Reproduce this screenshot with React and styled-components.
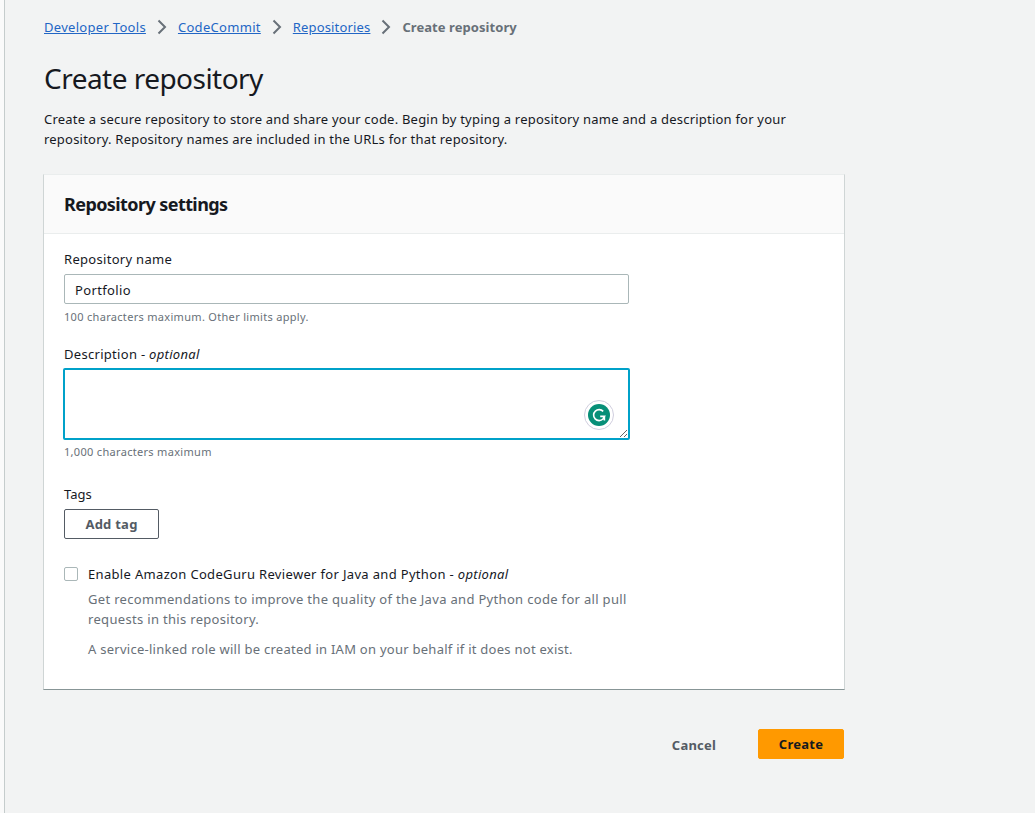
import React from 'react';
import styled, { createGlobalStyle, css } from 'styled-components';

const Global = createGlobalStyle`
  *, *::before, *::after { box-sizing: border-box; }
  body { margin: 0; background: #fafafa; color: #16191f; font: 13px/20px "Noto Sans", sans-serif; }
  h1, h2, p { margin: 0; }
`;

const Page = styled.main`
  margin-left: 4px;
  min-height: 813px;
  background: #f2f3f3;
  border-left: 1px solid #c5cccc;
  padding: 17px 0 0 39px;
`;

const Content = styled.div`
  width: 800px;
`;

const Breadcrumbs = styled.nav`
  display: flex;
  align-items: center;
  height: 20px;
`;

const Crumb = styled.a`
  color: #2266c5;
  text-decoration: underline;
  letter-spacing: ${({ $track }) => $track}px;
`;

const CurrentCrumb = styled.span`
  color: #687078;
  font-weight: 700;
  letter-spacing: 0.06px;
`;

const Separator = styled.svg`
  width: 10px;
  height: 16px;
  margin: 0 11px;
  fill: none;
  stroke: #687078;
  stroke-width: 2;
`;

const Title = styled.h1`
  margin-top: 23px;
  font-size: 28px;
  line-height: 36px;
  font-weight: 400;
  letter-spacing: -0.53px;
`;

const Intro = styled.p`
  margin-top: 13px;
  width: 770px;
  letter-spacing: 0.215px;
`;

const Panel = styled.section`
  margin: 25px 0 0 -1px;
  width: 802px;
  height: 516px;
  background: #fff;
  border: 1px solid #cfd5d5;
  border-top-color: #eaeded;
  border-bottom-color: #879596;
`;

const PanelHeader = styled.header`
  height: 59px;
  padding: 18px 20px;
  background: #fafafa;
  border-bottom: 1px solid #eaeded;
`;

const PanelTitle = styled.h2`
  font-size: 18px;
  line-height: 22px;
  font-weight: 700;
  letter-spacing: -0.58px;
`;

const Form = styled.div`
  display: flex;
  flex-direction: column;
  padding: 15px 20px;
`;

const Label = styled.label`
  line-height: 20px;
  letter-spacing: 0.3px;
`;

const Field = css`
  display: block;
  width: 565px;
  border: 1px solid #aab7b8;
  border-radius: 2px;
  background: #fff;
  color: #16191f;
  font: inherit;
  letter-spacing: 0.35px;
`;

const TextInput = styled.input`
  ${Field}
  height: 30px;
  margin-top: 5px;
  padding: 4px 10px 2px;
`;

const DescriptionWrap = styled.div`
  position: relative;
  width: 567px;
  margin: 4px 0 0 -1px;
`;

const TextArea = styled.textarea`
  ${Field}
  width: 567px;
  height: 72px;
  border: 2px solid #00a1c9;
  outline: none;
  resize: vertical;
`;

const Assistant = styled.svg`
  position: absolute;
  right: 15px;
  top: 31px;
  width: 32px;
  height: 32px;
`;

const Hint = styled.p`
  margin-top: ${({ $gap }) => $gap}px;
  font-size: 11px;
  line-height: 16px;
  letter-spacing: 0.31px;
  color: #687078;
`;

const Group = styled.div`
  margin-top: ${({ $gap }) => $gap}px;
`;

const Button = styled.button`
  height: 30px;
  padding: ${({ $kind }) => ($kind === 'link' ? '2px 0 0' : '0')};
  border-radius: 2px;
  font: 700 13px/20px "Noto Sans", sans-serif;
  letter-spacing: 0.25px;
  width: ${({ $width }) => $width}px;
  border: 1px solid ${({ $kind }) => ($kind === 'primary' ? '#ff9900' : $kind === 'link' ? 'transparent' : '#545b64')};
  background: ${({ $kind }) => ($kind === 'primary' ? '#ff9900' : 'transparent')};
  color: ${({ $kind }) => ($kind === 'primary' ? '#16191f' : '#545b64')};
`;

const CheckRow = styled.label`
  display: flex;
  align-items: center;
  gap: 10px;
  letter-spacing: 0.33px;
`;

const Checkbox = styled.input`
  appearance: none;
  width: 14px;
  height: 14px;
  margin: 0;
  border: 1px solid #aab7b8;
  border-radius: 2px;
  background: #fff;
`;

const CheckDetails = styled.div`
  width: 550px;
  margin: 5px 0 0 24px;
  color: #687078;
  letter-spacing: 0.32px;
  p + p { margin-top: 10px; letter-spacing: 0.26px; }
`;

const Actions = styled.footer`
  display: flex;
  justify-content: flex-end;
  gap: 20px;
  margin-top: 39px;
`;

const Chevron = () => (
  <Separator viewBox="0 0 10 16"><path d="M1.5 1.5 8 8l-6.5 6.5" /></Separator>
);

export default function App() {
  return (
    <Page>
      <Global />
      <Content>
        <Breadcrumbs>
          <Crumb href="#" $track={0.3}>Developer Tools</Crumb><Chevron />
          <Crumb href="#" $track={0.3}>CodeCommit</Crumb><Chevron />
          <Crumb href="#" $track={0.16}>Repositories</Crumb><Chevron />
          <CurrentCrumb>Create repository</CurrentCrumb>
        </Breadcrumbs>
        <Title>Create repository</Title>
        <Intro>Create a secure repository to store and share your code. Begin by typing a repository name and a description for your repository. Repository names are included in the URLs for that repository.</Intro>
        <Panel>
          <PanelHeader><PanelTitle>Repository settings</PanelTitle></PanelHeader>
          <Form>
            <Label htmlFor="name">Repository name</Label>
            <TextInput id="name" defaultValue="Portfolio" />
            <Hint $gap={5}>100 characters maximum. Other limits apply.</Hint>
            <Group $gap={19}>
              <Label htmlFor="description">Description - <em>optional</em></Label>
              <DescriptionWrap>
                <TextArea id="description" />
                <Assistant viewBox="0 0 32 32">
                  <circle cx="16" cy="16" r="14.5" fill="#fff" stroke="#d0cede" />
                  <circle cx="16" cy="16" r="11" fill="#078f78" />
                  <path d="M20.2 12.4A5.5 5.5 0 1 0 20 20l1.5-2.6h-4.3M21.4 17.4v4" fill="none" stroke="#fff" strokeWidth="1.6" />
                </Assistant>
              </DescriptionWrap>
              <Hint $gap={4}>1,000 characters maximum</Hint>
            </Group>
            <Group $gap={24}>
              <div>Tags</div>
              <Group $gap={5}><Button $width={95}>Add tag</Button></Group>
            </Group>
            <Group $gap={25}>
              <CheckRow><Checkbox type="checkbox" /><span>Enable Amazon CodeGuru Reviewer for Java and Python - <em>optional</em></span></CheckRow>
              <CheckDetails>
                <p>Get recommendations to improve the quality of the Java and Python code for all pull requests in this repository.</p>
                <p>A service-linked role will be created in IAM on your behalf if it does not exist.</p>
              </CheckDetails>
            </Group>
          </Form>
        </Panel>
        <Actions>
          <Button $kind="link" $width={88}>Cancel</Button>
          <Button $kind="primary" $width={86}>Create</Button>
        </Actions>
      </Content>
    </Page>
  );
}
